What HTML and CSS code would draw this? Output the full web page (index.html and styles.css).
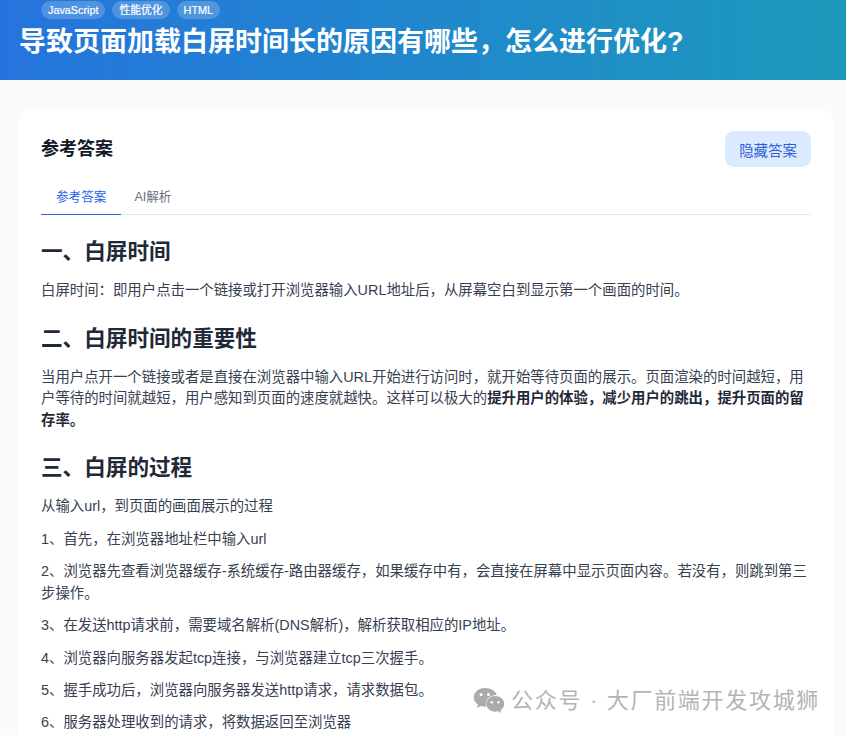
FILE: index.html
```html
<!DOCTYPE html>
<html lang="zh-CN">
<head>
<meta charset="utf-8">
<title>导致页面加载白屏时间长的原因有哪些，怎么进行优化?</title>
<link rel="stylesheet" href="styles.css">
</head>
<body>
<header class="hero">
  <div class="tags">
    <span class="tag">JavaScript</span>
    <span class="tag">性能优化</span>
    <span class="tag">HTML</span>
  </div>
  <h1 class="title">导致页面加载白屏时间长的原因有哪些，怎么进行优化?</h1>
</header>
<main class="main">
  <section class="card">
    <div class="card-head">
      <h2 class="card-title">参考答案</h2>
      <button class="toggle">隐藏答案</button>
    </div>
    <nav class="tabs">
      <span class="tab active">参考答案</span>
      <span class="tab">AI解析</span>
    </nav>
    <article class="answer">
      <h2>一、白屏时间</h2>
      <p>白屏时间：即用户点击一个链接或打开浏览器输入URL地址后，从屏幕空白到显示第一个画面的时间。</p>
      <h2>二、白屏时间的重要性</h2>
      <p>当用户点开一个链接或者是直接在浏览器中输入URL开始进行访问时，就开始等待页面的展示。页面渲染的时间越短，用户等待的时间就越短，用户感知到页面的速度就越快。这样可以极大的<strong>提升用户的体验，减少用户的跳出，提升页面的留存率。</strong></p>
      <h2>三、白屏的过程</h2>
      <p>从输入url，到页面的画面展示的过程</p>
      <p>1、首先，在浏览器地址栏中输入url</p>
      <p>2、浏览器先查看浏览器缓存-系统缓存-路由器缓存，如果缓存中有，会直接在屏幕中显示页面内容。若没有，则跳到第三步操作。</p>
      <p>3、在发送http请求前，需要域名解析(DNS解析)，解析获取相应的IP地址。</p>
      <p>4、浏览器向服务器发起tcp连接，与浏览器建立tcp三次握手。</p>
      <p>5、握手成功后，浏览器向服务器发送http请求，请求数据包。</p>
      <p>6、服务器处理收到的请求，将数据返回至浏览器</p>
    </article>
  </section>
</main>
<div class="watermark">
  <svg class="wechat" viewBox="0 0 32 28" width="32" height="28" aria-hidden="true">
    <path class="w-back" d="M12 1C5.600 1 .8 5.200.8 10.400c0 3 1.600 5.500 4.200 7.200L4 21l3.900-2.100c1.300.4 2.700.6 4.100.6.500 0 .9 0 1.300-.1a8.300 8.300 0 0 1-.4-2.500c0-5 4.600-8.800 10.100-8.800h.8C22.700 4 17.800 1 12 1z"/>
    <path class="w-front" d="M31.300 16.800c0-4.400-4.300-7.900-9-7.900-5 0-9 3.500-9 7.900s4 7.900 9 7.900c1 0 2-.1 3-.4l3 1.700-.8-2.800c2.500-1.500 3.800-3.800 3.800-6.400z"/>
    <circle class="w-eye" cx="8" cy="7.500" r="1.500"/>
    <circle class="w-eye" cx="15.500" cy="7.500" r="1.500"/>
    <circle class="w-eye" cx="18.800" cy="15.300" r="1.200"/>
    <circle class="w-eye" cx="25.500" cy="15.300" r="1.200"/>
  </svg>
  <span>公众号 · 大厂前端开发攻城狮</span>
</div>
</body>
</html>
```

FILE: styles.css
```css
* { box-sizing: border-box; }
html, body { margin: 0; height: 735px; overflow: hidden; }
body {
  position: relative;
  background: #f9fafb;
  font-family: "Liberation Sans", "Noto Sans CJK SC", sans-serif;
  color: #1f2937;
}
.hero {
  height: 80px;
  padding: 1px 19px 0;
  background: linear-gradient(90deg, #2574dd, #1c9abc);
  color: #fff;
}
.tags { display: flex; gap: 7px; padding-left: 22px; }
.tag {
  height: 18px;
  padding: 0 7px;
  line-height: 18px;
  font-size: 10.800px;
  font-weight: 400;
  border-radius: 9px;
  background: rgba(255, 255, 255, 0.2);
  -webkit-text-stroke: 0.2px #fff;
}
.title { margin: 5px 0 0; font-size: 27px; line-height: 36px; font-weight: 700; }
.main { padding: 29px 13px 0 19px; }
.card {
  background: #fff;
  border-radius: 13px;
  padding: 22px 22px 0;
  height: 640px;
}
.card-head { display: flex; justify-content: space-between; align-items: center; height: 36px; }
.card-title { margin: 0 0 4px; font-size: 18px; font-weight: 700; color: #111827; }
.toggle {
  width: 86px;
  height: 36px;
  border: 0;
  border-radius: 9px;
  background: #dbeafe;
  color: #2f5fd8;
  font: inherit;
  font-size: 14.400px;
}
.tabs { display: flex; margin-top: 12px; border-bottom: 1px solid #e5e7eb; height: 36px; }
.tab { padding: 0 15px; font-size: 12.600px; line-height: 36px; color: #6b7280; height: 36px; }
.tab + .tab { padding-left: 14px; margin-left: -1px; }
.tab.active { color: #2563eb; border-bottom: 1px solid #2563eb; }
.answer { font-size: 14.400px; line-height: 21.600px; color: #374151; }
.answer h2 { margin: 21px 0 12px; font-size: 21.600px; line-height: 32px; font-weight: 700; color: #1f2937; }
.answer p { margin: 0 0 10.800px; }
.answer strong { color: #1f2937; font-weight: 700; }
.watermark {
  position: absolute;
  left: 473px;
  top: 686px;
  display: flex;
  align-items: center;
  gap: 6px;
  font-size: 22px;
  line-height: 30px;
  color: #b4b4b4;
  letter-spacing: 1.700px;
  white-space: nowrap;
}
.wechat { fill: #ababab; }
.w-eye { fill: #fff; }
```
